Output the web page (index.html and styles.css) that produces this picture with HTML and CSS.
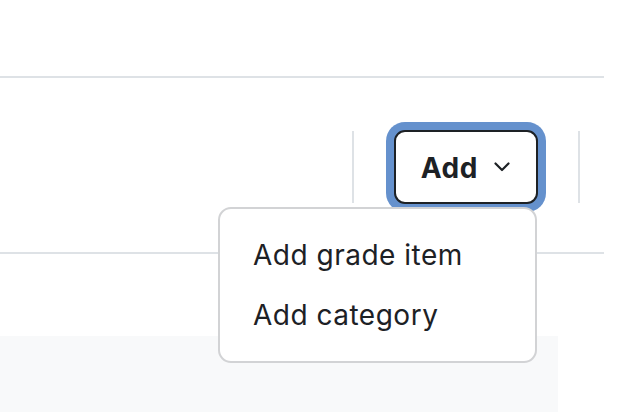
FILE: index.html
```html
<!DOCTYPE html>
<html lang="en">
<head>
<meta charset="utf-8">
<title>Gradebook setup</title>
<link rel="stylesheet" href="styles.css">
</head>
<body>
<div class="page">
  <div class="header"></div>
  <div class="tertiary">
    <span class="sep"></span>
    <div class="action">
      <button class="btn-add" type="button">
        <span class="btn-label">Add</span>
        <svg class="chev" width="16" height="10" viewBox="0 0 16 10" aria-hidden="true">
          <polyline points="1.5,1.5 8,8 14.5,1.5" fill="none" stroke="#1d2125" stroke-width="2.2" stroke-linecap="round" stroke-linejoin="round"/>
        </svg>
      </button>
      <div class="menu">
        <a class="menu-item">Add grade item</a>
        <a class="menu-item">Add category</a>
      </div>
    </div>
    <span class="sep"></span>
  </div>
  <div class="table-area"></div>
</div>
</body>
</html>
```

FILE: styles.css
```css
html, body {
  margin: 0;
  padding: 0;
  background: #ffffff;
  font-family: Inter, "Liberation Sans", Arial, sans-serif;
  color: #1d2125;
}

.page {
  width: 640px;
  height: 412px;
  overflow: hidden;
}

.header {
  width: 604px;
  height: 76px;
  border-bottom: 2px solid #dee2e6;
}

.tertiary {
  width: 580px;
  padding: 52px 24px 48px 0;
  display: flex;
  justify-content: flex-end;
  align-items: center;
  gap: 40px;
  border-bottom: 2px solid #dee2e6;
}

.sep {
  display: block;
  width: 2px;
  height: 72px;
  background: #dee2e6;
}

.action {
  position: relative;
}

.btn-add {
  display: flex;
  align-items: center;
  gap: 16px;
  height: 74px;
  padding: 0 26px 0 25px;
  background: #ffffff;
  border: 2px solid #1d2125;
  border-radius: 11px;
  box-shadow: 0 0 0 8px #6591cd;
  font-family: Inter, "Liberation Sans", Arial, sans-serif;
  font-size: 28px;
  font-weight: 700;
  letter-spacing: 0.6px;
  color: #1d2125;
  cursor: pointer;
}

.btn-label {
  line-height: 1;
  padding-top: 1px;
}

.chev {
  display: block;
  margin-top: -1px;
}

.menu {
  position: absolute;
  top: 77px;
  right: 1px;
  width: 315px;
  padding: 16px 0;
  background: #ffffff;
  border: 2px solid #d2d3d5;
  border-radius: 13px;
  display: flex;
  flex-direction: column;
  z-index: 5;
}

.menu-item {
  display: block;
  padding: 9px 33px;
  font-size: 28px;
  line-height: 42px;
  letter-spacing: 0.5px;
  color: #1d2125;
  white-space: nowrap;
}

.table-area {
  width: 558px;
  height: 120px;
  margin-top: 82px;
  background: #f8f9fa;
}
```
